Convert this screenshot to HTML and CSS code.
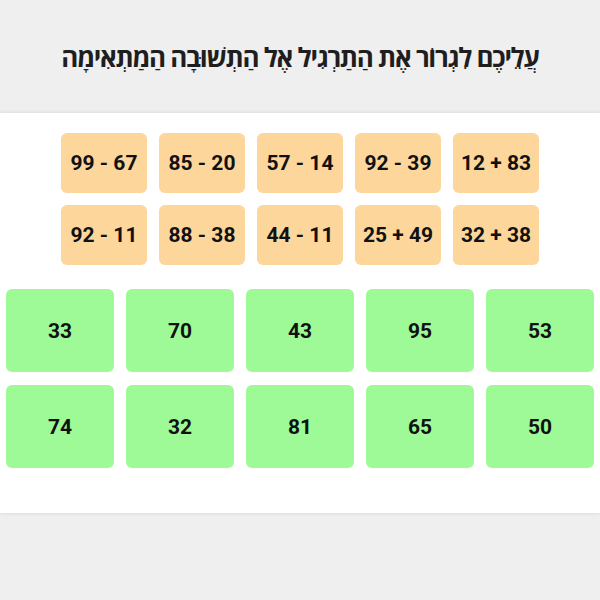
FILE: index.html
```html
<!DOCTYPE html>
<html lang="he">
  <head>
    <meta charset="utf-8">
    <title>גרירת תרגילים</title>
    <link rel="stylesheet" href="styles.css">
  </head>
  <body>
    <header class="top">
      <h1 dir="rtl">עֲלֵיכֶם לִגְרוֹר אֶת הַתַרְגִיל אֶל הַתְשׁוּבָה הַמַתְאִימָה</h1>
    </header>

    <main class="board">
      <div class="exercises">
        <div class="card exercise" draggable="true">99 - 67</div>
        <div class="card exercise" draggable="true">85 - 20</div>
        <div class="card exercise" draggable="true">57 - 14</div>
        <div class="card exercise" draggable="true">92 - 39</div>
        <div class="card exercise" draggable="true">12 + 83</div>
        <div class="card exercise" draggable="true">92 - 11</div>
        <div class="card exercise" draggable="true">88 - 38</div>
        <div class="card exercise" draggable="true">44 - 11</div>
        <div class="card exercise" draggable="true">25 + 49</div>
        <div class="card exercise" draggable="true">32 + 38</div>
      </div>

      <div class="answers">
        <div class="card answer">33</div>
        <div class="card answer">70</div>
        <div class="card answer">43</div>
        <div class="card answer">95</div>
        <div class="card answer">53</div>
        <div class="card answer">74</div>
        <div class="card answer">32</div>
        <div class="card answer">81</div>
        <div class="card answer">65</div>
        <div class="card answer">50</div>
      </div>
    </main>
  </body>
</html>
```

FILE: styles.css
```css
html, body {
  margin: 0;
  background-color: #efefef;
}

body {
  font-family: Roboto, Arial, sans-serif;
  height: 600px;
}

.top {
  height: 113px;
  display: flex;
  align-items: center;
  justify-content: center;
}

.top h1 {
  margin: 0;
  font-family: "Open Sans", "DejaVu Sans", sans-serif;
  font-size: 26px;
  font-weight: 700;
  letter-spacing: -1.3px;
  color: #1e1e1e;
}

.board {
  background-color: #fff;
  height: 400px;
  box-shadow: 0 0 4px rgba(0, 0, 0, 0.12);
  padding-top: 20px;
  box-sizing: border-box;
}

.card {
  display: flex;
  align-items: center;
  justify-content: center;
  border-radius: 6px;
  font-weight: 700;
  font-size: 21px;
  color: #111;
}

.exercises {
  width: 480px;
  margin: 0 auto;
  display: grid;
  grid-template-columns: repeat(5, 86px);
  gap: 12px;
  justify-content: center;
}

.exercise {
  height: 60px;
  background-color: #fdd69c;
  cursor: grab;
}

.answers {
  margin-top: 24px;
  padding: 0 6px;
  display: grid;
  grid-template-columns: repeat(5, 1fr);
  column-gap: 12px;
  row-gap: 13px;
}

.answer {
  height: 83px;
  background-color: #9dfa96;
}
```
